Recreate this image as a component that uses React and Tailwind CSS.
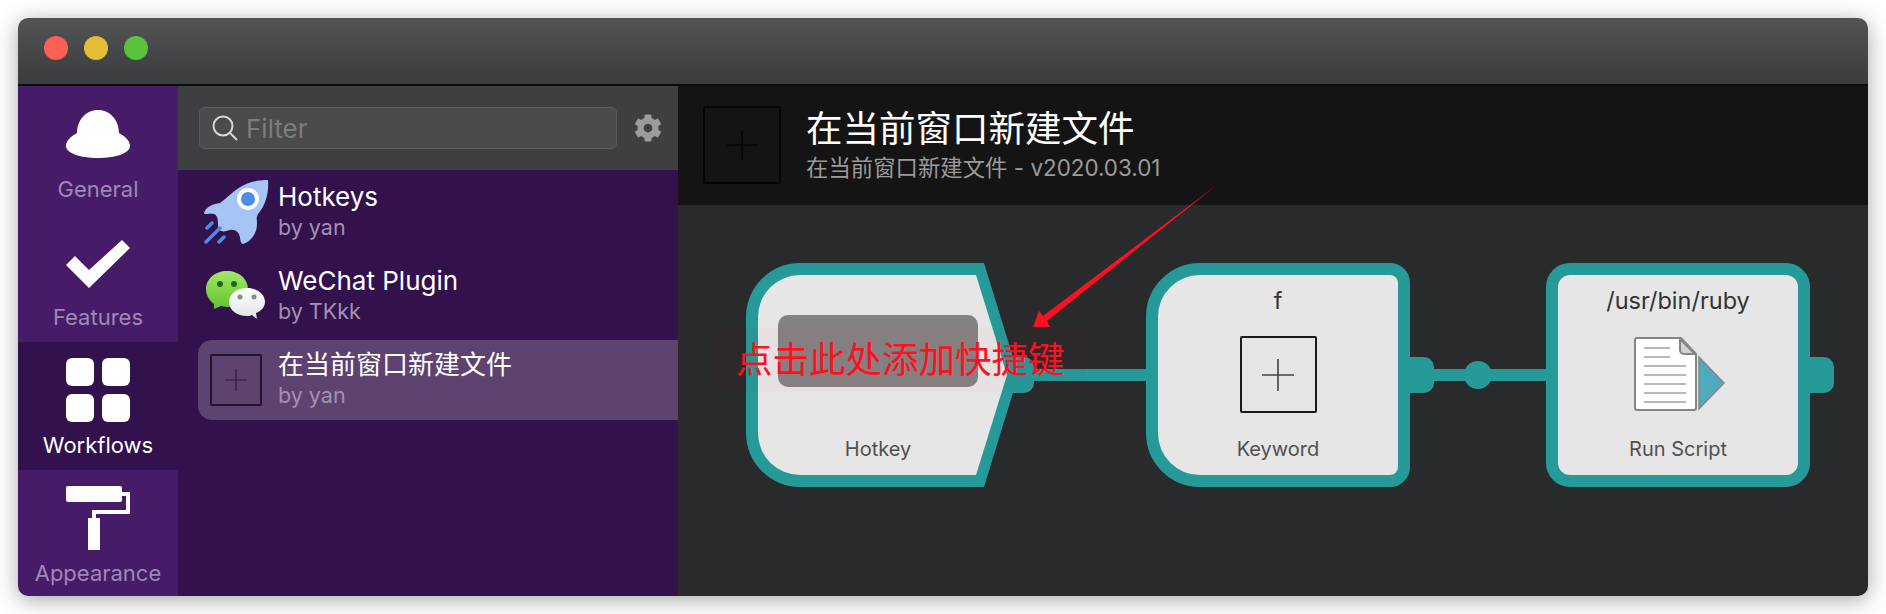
import React from 'react';
import { FaCog } from 'react-icons/fa';

const FONT = { fontFamily: 'Inter, "Noto Sans CJK SC", sans-serif' };

function HatIcon() {
  return (
    <svg viewBox="0 0 64 64" className="w-16 h-16" fill="#fff">
      <path d="M32 8c-12 0-21 10-21 23C4 35 0 39 0 44c0 7 14 12 32 12s32-5 32-12c0-5-4-9-11-13C53 18 44 8 32 8z" />
    </svg>
  );
}

function CheckIcon() {
  return (
    <svg viewBox="0 0 64 64" className="w-16 h-16" fill="#fff">
      <path d="M0 35l9-9 14 14L56 10l8 8-41 40z" />
    </svg>
  );
}

function GridIcon() {
  return (
    <div className="w-16 h-16 grid grid-cols-2 gap-2">
      <div className="bg-white rounded-md" />
      <div className="bg-white rounded-md" />
      <div className="bg-white rounded-md" />
      <div className="bg-white rounded-md" />
    </div>
  );
}

function RollerIcon() {
  return (
    <svg viewBox="0 0 64 64" className="w-16 h-16" fill="#fff">
      <rect x="0" y="0" width="56" height="16" rx="2" />
      <path d="M56 6h8v22H30v4h-4V25a1 1 0 0 1 1-1h33V10h-4z" />
      <rect x="22" y="32" width="12" height="32" />
    </svg>
  );
}

function RocketIcon() {
  return (
    <svg viewBox="0 0 65 64" className="w-[65px] h-16 shrink-0">
      <path d="M64 0C50 0 38 4 27 14 22 18 19 21 16 23 8 24 2 27 0 33c0 2 6 0 10 1 3 1 4 5 4 9 0 3 0 6 3 8 3 1 5 0 9-1 5-1 9 2 10 7 0 3 1 7 3 7 7-2 14-10 14-20 0-4-1-6 1-10C62 25 65 12 64 0z" fill="#a7c5f4" />
      <circle cx="44" cy="19" r="11" fill="#fff" />
      <circle cx="44" cy="19" r="7" fill="#4c8be6" />
      <path d="M3 48l5-5M2 62l14-14M15 62l5-5" stroke="#4c8be6" strokeWidth="3.5" strokeLinecap="round" />
    </svg>
  );
}

function WechatIcon() {
  return (
    <svg viewBox="0 0 60 50" className="w-[60px] h-[50px] shrink-0">
      <defs>
        <linearGradient id="wg" x1="0" y1="0" x2="0" y2="1">
          <stop offset="0" stopColor="#a2e868" />
          <stop offset="1" stopColor="#62c22e" />
        </linearGradient>
        <linearGradient id="ww" x1="0" y1="0" x2="0" y2="1">
          <stop offset="0" stopColor="#ffffff" />
          <stop offset="1" stopColor="#dfe3e4" />
        </linearGradient>
      </defs>
      <path d="M21 0C9 0 0 8 0 18c0 7 4 12 8 15l0 5 7-3c2 0 4 1 6 1 12 0 21-8 21-18S33 0 21 0z" fill="url(#wg)" />
      <circle cx="14" cy="13" r="3" fill="#1d6a1d" />
      <circle cx="28" cy="13" r="3" fill="#1d6a1d" />
      <path d="M41 17c-10 0-18 6-18 14s8 14 18 14c2 0 3 0 5-1l5 4-1-6c5-2 9-6 9-11 0-8-8-14-18-14z" fill="url(#ww)" />
      <circle cx="34" cy="26" r="2.5" fill="#8a8a8a" />
      <circle cx="48" cy="26" r="2.5" fill="#8a8a8a" />
    </svg>
  );
}

function PlusBox({ className, plus, line, border }) {
  return (
    <div className={`flex items-center justify-center rounded-[2px] border-2 ${border} ${className}`}>
      <svg viewBox="0 0 32 32" className={plus} stroke={line} strokeWidth="1.6">
        <path d="M0 16h32M16 0v32" />
      </svg>
    </div>
  );
}

function ScriptIcon() {
  return (
    <svg viewBox="0 0 92 74" className="w-[92px] h-[74px]">
      <path d="M4 1h44l15 16v54a2 2 0 0 1-2 2H4a2 2 0 0 1-2-2V3a2 2 0 0 1 2-2z" fill="#fff" stroke="#858585" strokeWidth="2" />
      <path d="M47 2v11a4 4 0 0 0 4 4h11z" fill="#d4d4d4" stroke="#858585" strokeWidth="2" />
      <path d="M11 11h26M11 20h26M11 29h42M11 38h42M11 47h42M11 56h42M11 65h42" stroke="#b9b9b9" strokeWidth="2" />
      <path d="M66 20l25 26-25 26z" fill="#4eaabc" stroke="#868686" strokeWidth="1.5" />
    </svg>
  );
}

function Tab({ icon, label, active }) {
  return (
    <div className={`h-32 shrink-0 pt-4 flex flex-col items-center ${active ? 'bg-[#32114d]' : ''}`}>
      {icon}
      <div className={`mt-[7px] leading-8 text-[22px] ${active ? 'text-white' : 'text-[#a186b8]'}`}>{label}</div>
    </div>
  );
}

function Row({ icon, title, by, selected }) {
  return (
    <div className={`h-20 ml-5 pl-1 flex items-center rounded-l-[14px] ${selected ? 'bg-[#5e4270]' : ''}`}>
      <div className="w-[72px] shrink-0 flex justify-center pr-1">{icon}</div>
      <div className="ml-1 min-w-0">
        <div className="text-[26px] leading-[31px] text-white whitespace-nowrap">{title}</div>
        <div className="text-[21.500px] leading-[31px] text-[#a491b1] whitespace-nowrap">{by}</div>
      </div>
    </div>
  );
}

function Stub({ className }) {
  return <div className={`absolute w-6 h-9 top-[152px] bg-[#259a99] rounded-r-[10px] ${className}`} />;
}

function Wire({ className }) {
  return <div className={`absolute h-3 top-[164px] bg-[#259a99] ${className}`} />;
}

function NodeLabel({ children }) {
  return <div className="text-[20px] leading-6 text-[#505050] whitespace-nowrap">{children}</div>;
}

export default function App() {
  return (
    <div className="relative w-[1886px] h-[614px] bg-white p-[18px] overflow-hidden" style={FONT}>
      <div className="relative w-[1850px] h-[578px] rounded-[10px] overflow-hidden flex flex-col shadow-[0_4px_22px_rgba(0,0,0,0.35)]">
        {/* title bar */}
        <div className="h-[68px] shrink-0 flex items-center gap-4 pl-[26px] pb-[6px] border-b-2 border-[#0b0b0b] bg-gradient-to-b from-[#525354] to-[#3b3c3d]">
          <div className="w-6 h-6 rounded-full bg-[#fe5f57]" />
          <div className="w-6 h-6 rounded-full bg-[#e3bc38]" />
          <div className="w-6 h-6 rounded-full bg-[#59c13b]" />
        </div>

        <div className="flex-1 flex min-h-0">
          {/* tabs */}
          <div className="w-40 shrink-0 bg-[#461c68] flex flex-col overflow-hidden">
            <Tab icon={<HatIcon />} label="General" />
            <Tab icon={<CheckIcon />} label="Features" />
            <Tab icon={<GridIcon />} label="Workflows" active />
            <Tab icon={<RollerIcon />} label="Appearance" />
          </div>

          {/* workflow list */}
          <div className="w-[500px] shrink-0 bg-[#32114d] flex flex-col">
            <div className="h-[84px] shrink-0 bg-[#3e3f40] flex items-center pl-[21px] pr-4">
              <div className="w-[418px] h-[42px] rounded-md bg-[#4a4b4c] border border-[#5a5b5c] flex items-center pl-3">
                <svg viewBox="0 0 26 26" className="w-[26px] h-[26px] shrink-0" fill="none" stroke="#d8d8d8" strokeWidth="2">
                  <circle cx="11" cy="11" r="9.500" />
                  <path d="M18 18l7 7" />
                </svg>
                <span className="ml-2 text-[26px] text-[#7c7d7e]">Filter</span>
              </div>
              <FaCog className="ml-[17px] text-[28px] text-[#9c9c9c]" />
            </div>
            <div className="flex flex-col gap-1 pt-[2px]">
              <Row icon={<RocketIcon />} title="Hotkeys" by="by yan" />
              <Row icon={<WechatIcon />} title="WeChat Plugin" by="by TKkk" />
              <Row
                icon={<PlusBox className="w-[52px] h-[52px] shrink-0" plus="w-[22px] h-[22px]" line="#2a1a3a" border="border-[#1c1526]" />}
                title="在当前窗口新建文件"
                by="by yan"
                selected
              />
            </div>
          </div>

          {/* workflow detail */}
          <div className="flex-1 flex flex-col min-w-0 bg-[#292a2c]">
            <div className="h-[119px] shrink-0 bg-[#141414] flex items-center pl-[25px]">
              <PlusBox className="w-[78px] h-[78px] -mt-[2px]" plus="w-[30px] h-[30px]" line="#050505" border="border-[#050505]" />
              <div className="ml-[25px]">
                <div className="text-[36.500px] leading-[44px] text-white whitespace-nowrap">在当前窗口新建文件</div>
                <div className="text-[22.400px] leading-[34px] text-[#9b9b9b] whitespace-nowrap">在当前窗口新建文件 - v2020.03.01</div>
              </div>
            </div>

            {/* node canvas */}
            <div className="relative flex-1">
              <svg viewBox="0 0 300 224" className="absolute left-[68px] top-[58px] w-[300px] h-[224px]">
                <path d="M54 0H238L272.500 112 238 224H54A54 54 0 0 1 0 170V54A54 54 0 0 1 54 0z" fill="#259a99" />
                <path d="M54 12H230L261 112 230 212H54A42 42 0 0 1 12 170V54A42 42 0 0 1 54 12z" fill="#e6e6e6" />
              </svg>
              <div className="absolute left-[100px] top-[110px] w-[200px] h-[72px] rounded-[10px] bg-[#838282]" />
              <div className="absolute left-[80px] w-[240px] top-[232px] flex justify-center"><NodeLabel>Hotkey</NodeLabel></div>
              <Stub className="left-[332px]" />
              <Wire className="left-[356px] w-[112px]" />

              <div className="absolute left-[468px] top-[58px] w-[264px] h-[224px] box-border border-12 border-[#259a99] bg-[#e6e6e6] rounded-tl-[54px] rounded-bl-[54px] rounded-tr-[20px] rounded-br-[20px] flex flex-col items-center">
                <div className="mt-[12px] text-[23.500px] leading-7 text-[#333]">f</div>
                <PlusBox className="mt-[21px] w-[77px] h-[77px]" plus="w-8 h-8" line="#444" border="border-[#1a1a1a]" />
                <div className="mt-[24px]"><NodeLabel>Keyword</NodeLabel></div>
              </div>
              <Stub className="left-[732px]" />
              <Wire className="left-[756px] w-[112px]" />
              <div className="absolute left-[786px] top-[156px] w-7 h-7 rounded-full bg-[#259a99]" />

              <div className="absolute left-[868px] top-[58px] w-[264px] h-[224px] box-border border-12 border-[#259a99] bg-[#e6e6e6] rounded-[24px] flex flex-col items-center">
                <div className="mt-[12px] text-[23.500px] leading-7 text-[#333] whitespace-nowrap">/usr/bin/ruby</div>
                <div className="mt-[22px] ml-[2px]"><ScriptIcon /></div>
                <div className="mt-[26px]"><NodeLabel>Run Script</NodeLabel></div>
              </div>
              <Stub className="left-[1132px]" />
            </div>
          </div>
        </div>
      </div>

      {/* red annotation drawn over the window */}
      <div className="absolute left-[716px] top-[328px] w-[370px] h-[64px] bg-[#ff000005]" />
      <div className="absolute left-[736px] top-[336px] text-[36.500px] leading-[48px] text-[#ff1020] whitespace-nowrap">点击此处添加快捷键</div>
      <svg viewBox="0 0 1886 614" className="absolute left-0 top-0 w-[1886px] h-[614px] pointer-events-none">
        <path d="M1218 184L1047 321 1050 327 1033 327 1039 311 1043 316z" fill="#ff1020" />
      </svg>
    </div>
  );
}
